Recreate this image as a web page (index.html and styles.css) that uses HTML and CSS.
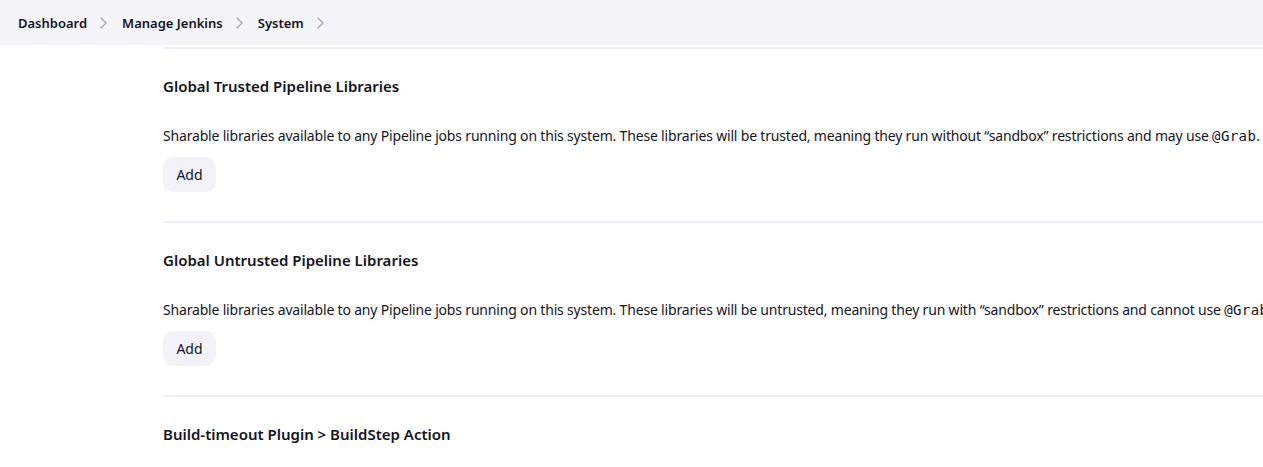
FILE: index.html
```html
<!DOCTYPE html>
<html lang="en">
<head>
<meta charset="utf-8">
<title>System - Jenkins</title>
<link rel="stylesheet" href="styles.css">
</head>
<body>
<header class="topbar">
  <nav class="crumbs">
    <a class="crumb" href="#">Dashboard</a>
    <svg class="chev" viewBox="0 0 10 14" width="10" height="14"><path d="M3 2l5 5-5 5" fill="none" stroke="currentColor" stroke-width="1.4" stroke-linecap="round" stroke-linejoin="round"/></svg>
    <a class="crumb" href="#">Manage Jenkins</a>
    <svg class="chev" viewBox="0 0 10 14" width="10" height="14"><path d="M3 2l5 5-5 5" fill="none" stroke="currentColor" stroke-width="1.4" stroke-linecap="round" stroke-linejoin="round"/></svg>
    <a class="crumb" href="#">System</a>
    <svg class="chev" viewBox="0 0 10 14" width="10" height="14"><path d="M3 2l5 5-5 5" fill="none" stroke="currentColor" stroke-width="1.4" stroke-linecap="round" stroke-linejoin="round"/></svg>
  </nav>
</header>
<main class="content">
  <section class="section">
    <h2 class="title">Global Trusted Pipeline Libraries</h2>
    <p class="desc">Sharable libraries available to any Pipeline jobs running on this system. These libraries will be trusted, meaning they run without “sandbox” restrictions and may use <code>@Grab</code>.</p>
    <button class="btn">Add</button>
  </section>
  <section class="section">
    <h2 class="title">Global Untrusted Pipeline Libraries</h2>
    <p class="desc">Sharable libraries available to any Pipeline jobs running on this system. These libraries will be untrusted, meaning they run with “sandbox” restrictions and cannot use <code>@Grab</code>.</p>
    <button class="btn">Add</button>
  </section>
  <section class="section section-last">
    <h2 class="title">Build-timeout Plugin &gt; BuildStep Action</h2>
  </section>
</main>
</body>
</html>
```
FILE: styles.css
```css
html, body {
  margin: 0;
  padding: 0;
  background: #ffffff;
  overflow: hidden;
}
body {
  font-family: "Noto Sans", "Open Sans", sans-serif;
  color: #14141f;
  width: 1263px;
  height: 467px;
}
.topbar {
  height: 45px;
  background: #f5f4f9;
  display: flex;
  align-items: center;
  padding-left: 18px;
}
.crumbs {
  display: flex;
  align-items: center;
}
.crumb {
  font-size: 13px;
  font-weight: 600;
  color: #14141f;
  text-decoration: none;
}
.chev {
  color: #a4a7c4;
  margin: 0 14px 0 11px;
}
.content {
  margin-top: 2px;
  padding-left: 163px;
  white-space: nowrap;
  overflow: hidden;
}
.section {
  border-top: 2px solid #f0eff6;
  height: 172px;
}
.section-last {
  height: auto;
  padding-bottom: 20px;
}
.title {
  margin: 0;
  padding-top: 26px;
  font-size: 15px;
  line-height: 22px;
  font-weight: 600;
}
.desc {
  margin: 29px 0 0;
  font-size: 14px;
  line-height: 20px;
  letter-spacing: -0.18px;
}
code {
  font-family: "DejaVu Sans Mono", monospace;
  font-size: 14px;
  letter-spacing: 0.4px;
}
.btn {
  margin-top: 11px;
  display: block;
  width: 53px;
  height: 35px;
  border: none;
  border-radius: 10px;
  background: #f3f2f8;
  font-family: inherit;
  font-size: 14px;
  color: #14141f;
  padding: 0;
}
```
